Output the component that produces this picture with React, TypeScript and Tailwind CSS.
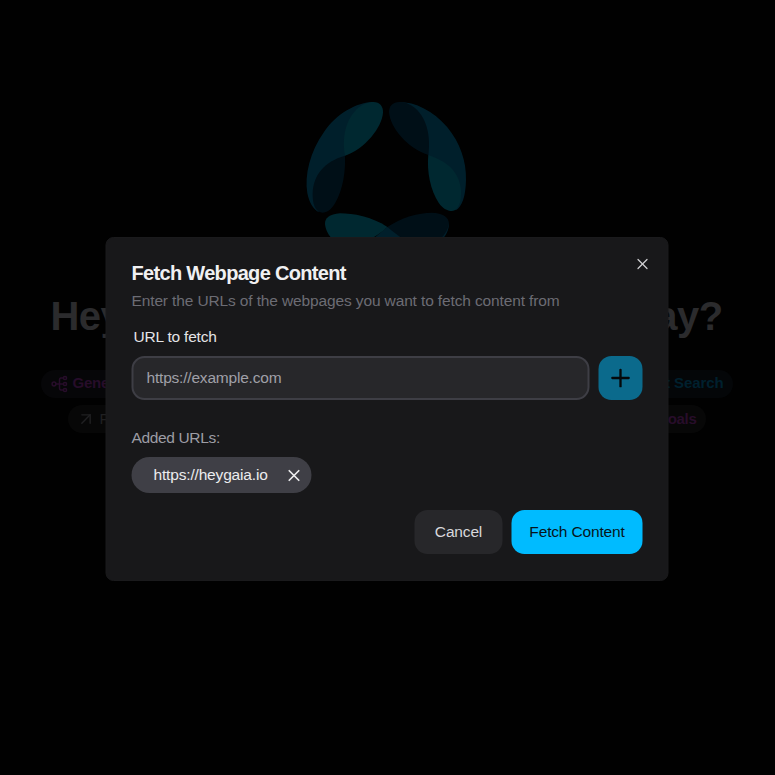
import React from "react";
import { ArrowUpRight, X, Plus } from "lucide-react";

function Logo() {
  return (
    <svg width="200" height="150" viewBox="0 0 600 450" className="shrink-0">
      <g>
        <path d="M250 36C200 36 138 72 102 126C60 185 43 255 52 310C57 335 68 356 85 366L165 197Z" fill="#001f2b" />
        <path d="M165 197C156 150 163 88 207 52C222 40 237 36 250 36C270 36 280 50 279 68C276 112 225 176 165 197Z" fill="#002830" />
        <path d="M165 197C167 240 160 298 136 338C125 358 112 367 97 368C75 367 67 340 68 310C70 255 102 215 165 197Z" fill="#000f17" />
      </g>
      <g>
        <path d="M328 36C375 36 430 62 472 112C510 158 530 215 528 270C527 318 517 350 497 361L415 195Z" fill="#001f2b" />
        <path d="M415 195C421 145 415 90 375 54C358 41 343 36 328 36C308 36 297 49 297 66C300 112 350 174 415 195Z" fill="#000f17" />
        <path d="M415 195C410 245 421 300 446 338C457 354 471 363 486 363C505 361 515 337 513 300C508 245 470 213 415 195Z" fill="#002830" />
      </g>
      <g>
        <path d="M292 411L477 402C476 422 467 438 455 450L245 450Z" fill="#001f2b" />
        <path d="M292 411C245 380 190 370 150 370C118 372 104 385 105 402C107 422 117 438 130 450H235C258 440 276 426 292 411Z" fill="#002830" />
        <path d="M292 411C335 382 385 368 425 368C460 369 477 382 477 402C473 423 460 440 448 450H345C325 438 307 424 292 411Z" fill="#000f17" />
      </g>
    </svg>
  );
}

function FlowIcon() {
  return (
    <svg width="18" height="18" viewBox="0 0 18 18" fill="none" stroke="currentColor" strokeWidth="1.5">
      <circle cx="3" cy="9" r="1.9" />
      <circle cx="14" cy="3" r="1.6" />
      <circle cx="14" cy="9" r="1.6" />
      <circle cx="14" cy="15" r="1.6" />
      <path d="M5 9h7.4M12.400 3H10Q8.500 3 8.500 5v8q0 2 1.500 2h2.400" />
    </svg>
  );
}

function Backdrop() {
  return (
    <div className="flex h-full w-[773px] flex-col items-center overflow-hidden pt-[90px]">
      <div className="flex w-full pl-[290px]"><Logo /></div>
      <div className="mt-[49px] flex h-[54px] w-[672px] items-center justify-between text-[40px] font-bold tracking-[-0.6px] text-[#2b2b2d]">
        <span>Hey</span>
        <span>today?</span>
      </div>
      <div className="mt-[27px] flex h-7 w-[692px] justify-between text-[15px] font-bold">
        <div className="flex items-center gap-1 rounded-full bg-[#060608] px-2.5 pb-px tracking-[-0.2px] text-[#270d2a]"><FlowIcon /><span>Generate</span></div>
        <div className="flex items-center rounded-full bg-[#040608] px-[9px] pb-px tracking-[-0.1px] text-[#00202e]">Internet Search</div>
      </div>
      <div className="mt-[7px] flex h-7 w-[638px] justify-between text-[15px]">
        <div className="flex items-center gap-0.5 rounded-full bg-[#070707] px-2 text-[#202022]"><ArrowUpRight size={20} strokeWidth={1.7} /><span className="pl-[2px]">Fetch</span></div>
        <div className="flex items-center rounded-full bg-[#070707] px-[9px] font-bold tracking-[-0.3px] text-[#270d2a]">Goals</div>
      </div>
    </div>
  );
}

export default function App() {
  return (
    <main className="relative h-[775px] w-[775px] overflow-hidden bg-[#010101] font-['Liberation_Sans',Arial,sans-serif]">
      <Backdrop />
      <div className="absolute inset-0 flex items-start justify-center pt-[237px]">
        <section role="dialog" className="relative flex h-[344px] w-[563px] -translate-x-[0.5px] flex-col rounded-[8px] border border-[#1a1a1c] bg-[#18181a] px-[25px] pt-[24px]">
          <button aria-label="Close" className="absolute right-[16.5px] top-[17px] text-[#d0d0d3]"><X size={18} strokeWidth={1.6} /></button>
          <h2 className="h-[23px] whitespace-nowrap text-[20px] leading-[23px] font-bold tracking-[-0.68px] text-[#f0f0f2]">Fetch Webpage Content</h2>
          <p className="mt-[6px] h-5 whitespace-nowrap text-[15.5px] leading-5 tracking-[-0.13px] text-[#6c6c74]">Enter the URLs of the webpages you want to fetch content from</p>
          <label className="mt-4 h-5 pl-[2px] text-[15.5px] leading-5 tracking-[-0.2px] text-[#e4e4e7]">URL to fetch</label>
          <div className="mt-[9px] flex gap-[9px]">
            <div className="flex h-11 w-[458px] items-center rounded-[13px] border-2 border-[#3e3e45] bg-[#27272a] pl-[13px] text-[15.5px] tracking-[-0.2px] text-[#a0a0a8]">https://example.com</div>
            <button aria-label="Add" className="flex h-11 w-11 items-center justify-center rounded-[13px] bg-[#0b6a8c] text-[#05080a]"><Plus size={28} strokeWidth={2} /></button>
          </div>
          <p className="mt-[28px] h-5 text-[15.5px] leading-5 tracking-[-0.35px] text-[#9d9da5]">Added URLs:</p>
          <div className="mt-[9px] flex h-9 w-[180px] items-center justify-between rounded-full bg-[#3f3f46] pl-[22px] pr-2 text-[15.5px] tracking-[-0.17px] text-[#ececee]">
            <span className="whitespace-nowrap">https://heygaia.io</span><X size={19} strokeWidth={2.2} />
          </div>
          <div className="mt-[17px] flex justify-end gap-[9px] text-[15.5px] tracking-[-0.16px]">
            <button className="h-11 w-[88px] rounded-[13px] bg-[#27272a] text-[#d8d8dc]">Cancel</button>
            <button className="h-11 w-[131px] rounded-[13px] bg-[#00bbff] whitespace-nowrap text-[#07151b]">Fetch Content</button>
          </div>
        </section>
      </div>
    </main>
  );
}
